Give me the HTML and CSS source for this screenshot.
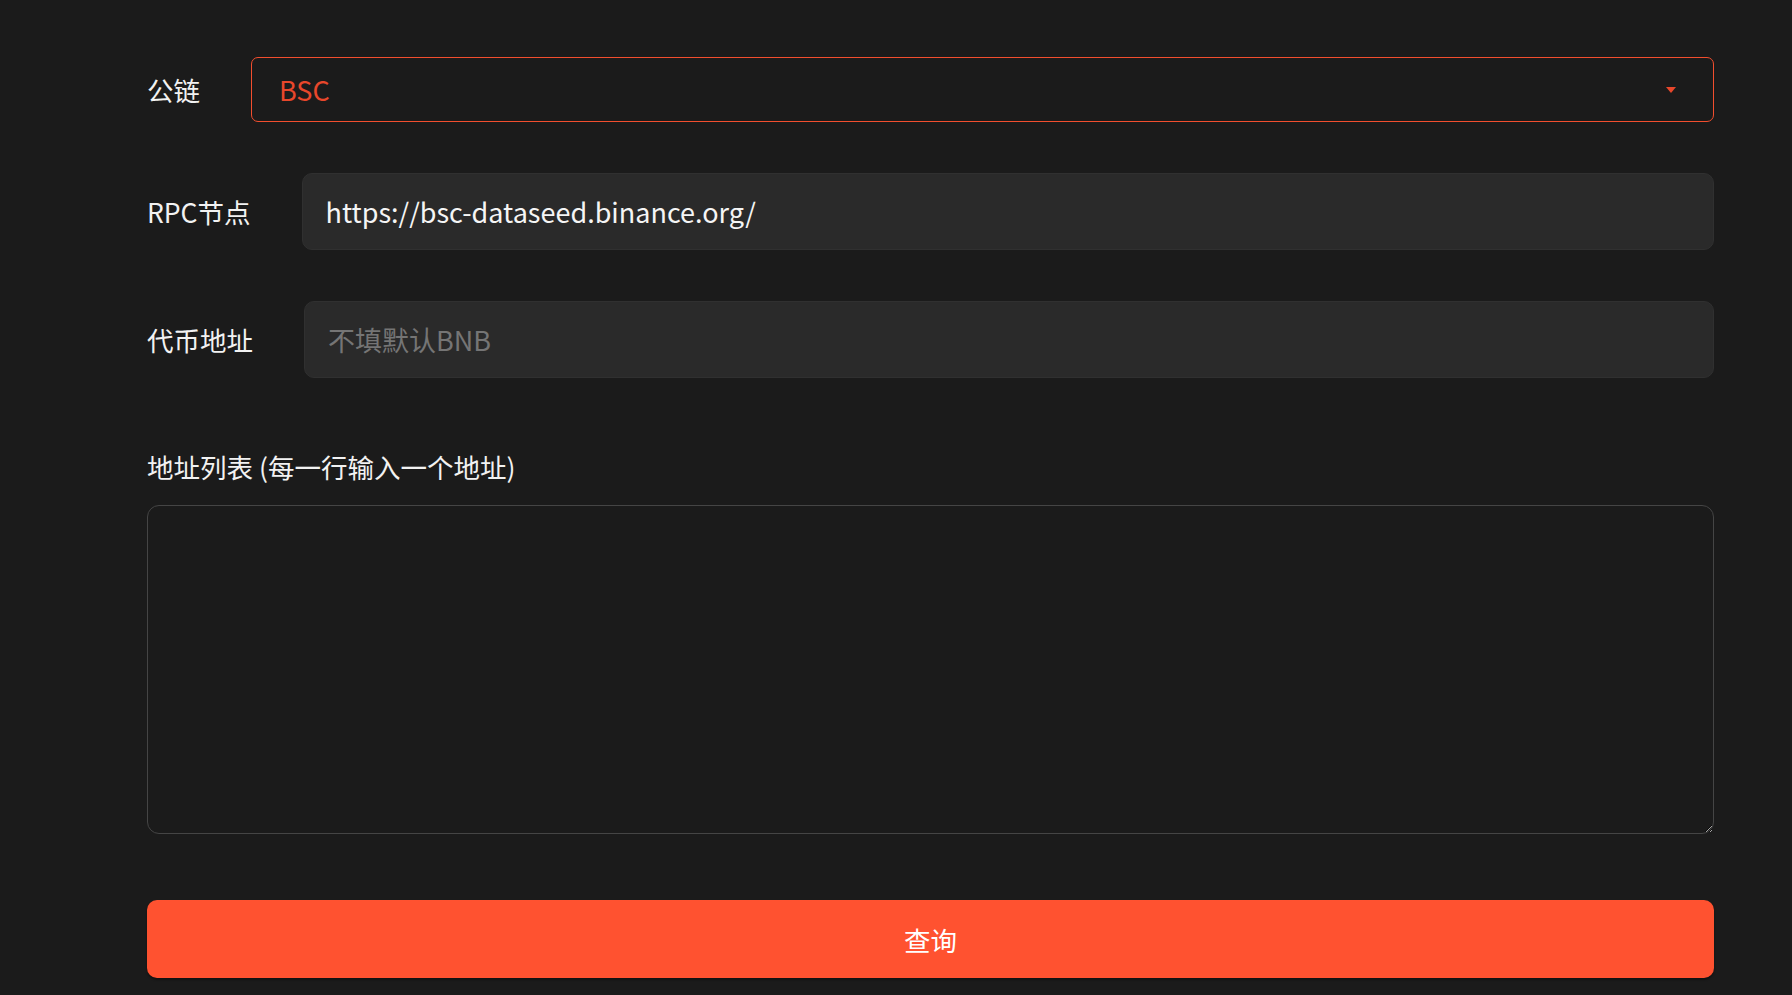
FILE: index.html
```html
<!DOCTYPE html>
<html lang="zh-CN">
<head>
  <meta charset="UTF-8">
  <meta name="viewport" content="width=device-width, initial-scale=1.0">
  <title>批量查询余额</title>
  <link rel="stylesheet" href="styles.css">
</head>
<body>

<form class="query-form">
  <!-- chain -->
  <div class="form-row">
    <label class="row-label">公链</label>
    <div class="chain-select">
      <span>BSC</span>
      <svg class="caret" width="10" height="6" viewBox="0 0 10 6"><path d="M0 0h10L5 6z" fill="#e8472b"/></svg>
    </div>
  </div>

  <div class="form-row">
    <label class="row-label" for="rpc">RPC节点</label>
    <input class="text-input" id="rpc" type="text" value="https://bsc-dataseed.binance.org/">
  </div>

  <div class="form-row">
    <label class="row-label" for="token">代币地址</label>
    <input class="text-input" id="token" type="text" placeholder="不填默认BNB">
  </div>

  <div class="list-block">
    <label class="list-label" for="addresses">地址列表 (每一行输入一个地址)</label>
    <textarea class="address-list" id="addresses"></textarea>
  </div>

  <button type="button" class="query-button">查询</button>
</form>

</body>
</html>
```

FILE: styles.css
```css
body {
  margin: 0;
  background: #1b1b1b;
  color: #f2f2f2;
  font-family: "Noto Sans CJK SC", "Noto Sans", sans-serif;
}

.query-form {
  padding: 57px 78px 20px 147px;
}

.form-row {
  display: flex;
  align-items: center;
  gap: 51px;
  margin-bottom: 51px;
}

.row-label {
  font-size: 26.5px;
  white-space: nowrap;
}

.chain-select {
  flex: 1;
  height: 65px;
  box-sizing: border-box;
  border: 1px solid #f24e2e;
  border-radius: 7px;
  display: flex;
  align-items: center;
  justify-content: space-between;
  padding: 0 37px 0 27px;
  color: #e8472b;
  font-size: 27px;
}

.text-input {
  flex: 1;
  height: 77px;
  box-sizing: border-box;
  background: #2a2a2a;
  border: 1px solid #303030;
  border-radius: 10px;
  padding: 0 23px;
  color: #f5f5f5;
  font-family: inherit;
  font-size: 27px;
  outline: none;
}

.text-input::placeholder {
  color: #757575;
}

.list-block {
  margin-top: 69px;
}

.list-label {
  display: block;
  font-size: 26.5px;
  margin-bottom: 19px;
}

.address-list {
  display: block;
  width: 100%;
  height: 329px;
  box-sizing: border-box;
  background: #1b1b1b;
  border: 1px solid #454545;
  border-radius: 12px;
  color: #f5f5f5;
  font-family: inherit;
  font-size: 20px;
  padding: 12px 20px;
  outline: none;
}

.query-button {
  display: block;
  width: 100%;
  height: 78px;
  margin-top: 66px;
  background: #ff5230;
  border: none;
  border-radius: 10px;
  box-shadow: 0 2px 2px rgba(0, 0, 0, 0.35);
  color: #fff;
  font-family: inherit;
  font-size: 26.5px;
  cursor: pointer;
}
```
